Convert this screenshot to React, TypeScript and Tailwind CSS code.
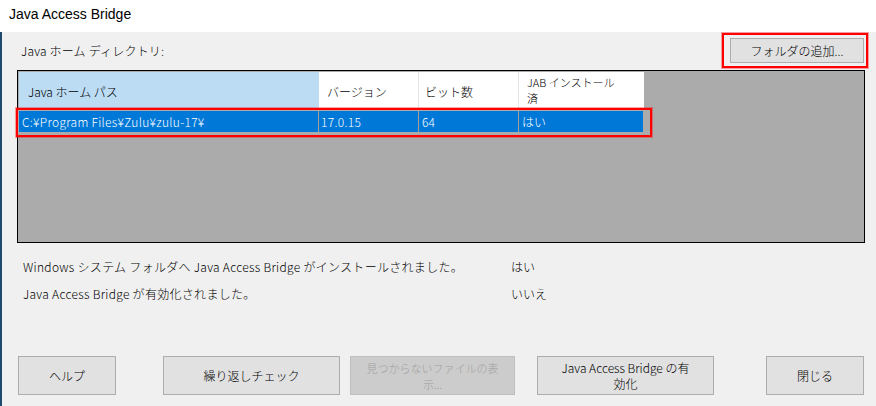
export default function App() {
  const btn =
    "flex h-[39px] items-center justify-center border border-[#adadad] bg-[#e1e1e1] text-[12px] text-black";

  return (
    <div className="flex h-[406px] w-[876px] flex-col bg-[#f0f0f0] font-['Noto_Sans_CJK_JP',sans-serif] text-[12px] font-light text-black">
      {/* Title bar */}
      <div className="flex h-8 items-center bg-white pb-[4px] pl-[9px] font-['Liberation_Sans',sans-serif] text-[14px] font-normal">
        Java Access Bridge
      </div>

      {/* Body */}
      <div className="flex flex-1 flex-col border-l-2 border-[#1c4a6e] pl-[15px] pr-[11px]">
        {/* Label + add folder */}
        <div className="mt-[6px] flex h-[25px] items-center justify-between">
          <span className="ml-[4px] tracking-[0.2px]">Java ホーム ディレクトリ:</span>
          <div className="relative mr-px">
            <button className="flex h-[25px] w-[134px] items-center justify-center border border-[#adadad] bg-[#e1e1e1]">
              フォルダの追加...
            </button>
            <div className="pointer-events-none absolute -top-[5px] -right-[4px] -bottom-[5px] -left-[8px] border-2 border-[#ff0000] shadow-[0_0_0_1px_rgba(255,0,0,0.35)]" />
          </div>
        </div>

        {/* Table */}
        <div className="mt-[7px] h-[173px] w-[848px] border border-black bg-[#ababab] p-px">
          <div className="flex h-[36px] w-[625px]">
            <div className="flex w-[300px] items-center border-r border-[#bcdcf4] bg-[#bcdcf4] pl-[9px] pt-[3px]">
              Java ホーム パス
            </div>
            <div className="flex w-[100px] items-center border-r border-[#e5e5e5] bg-white pl-[8px] pt-[3px]">
              バージョン
            </div>
            <div className="flex w-[100px] items-center border-r border-[#e5e5e5] bg-white pl-[6px] pt-[3px]">
              ビット数
            </div>
            <div className="flex w-[125px] flex-col justify-center bg-white pl-[8px] text-[11px] leading-[16px]">
              <span>JAB インストール</span>
              <span>済</span>
            </div>
          </div>
          <div className="relative mt-[3px] flex h-[21px] w-[624px] bg-[#0078d7] text-white">
            <div className="flex w-[300px] items-center border-r border-[#a69e94] pl-[3px] tracking-[0.3px]">
              C:¥Program Files¥Zulu¥zulu-17¥
            </div>
            <div className="flex w-[100px] items-center border-r border-[#a69e94] pl-[2px] tracking-[0.3px]">
              17.0.15
            </div>
            <div className="flex w-[100px] items-center border-r border-[#a69e94] pl-[3px]">
              64
            </div>
            <div className="flex flex-1 items-center pl-[3px]">はい</div>
            <div className="pointer-events-none absolute -top-[3px] -right-[9px] -bottom-[5px] -left-[3px] border-2 border-[#ff0000] shadow-[0_0_0_1px_rgba(255,0,0,0.35)]" />
          </div>
        </div>

        {/* Status */}
        <div className="mt-[16px] ml-[6px] grid grid-cols-[488px_auto]">
          <div className="h-[27px] leading-[16px] tracking-[0.3px]">
            Windows システム フォルダへ Java Access Bridge がインストールされました。
          </div>
          <div className="h-[27px] leading-[16px]">はい</div>
          <div className="h-[27px] leading-[16px] tracking-[0.3px]">
            Java Access Bridge が有効化されました。
          </div>
          <div className="h-[27px] leading-[16px]">いいえ</div>
        </div>

        {/* Buttons */}
        <div className="mt-auto mb-[11px] flex">
          <button className={`${btn} ml-px w-[98px]`}>ヘルプ</button>
          <button className={`${btn} ml-[47px] w-[177px]`}>繰り返しチェック</button>
          <button className="ml-[10px] flex h-[39px] w-[165px] flex-col items-center justify-center overflow-hidden border border-[#bfbfbf] bg-[#cccccc] text-[11px] leading-[16px] whitespace-nowrap text-[#a0a0a0]">
            <span>見つからないファイルの表</span>
            <span>示...</span>
          </button>
          <button className={`${btn} ml-[22px] w-[177px] flex-col text-[11px] leading-[16px]`}>
            <span>Java Access Bridge の有</span>
            <span>効化</span>
          </button>
          <button className={`${btn} ml-[52px] w-[98px]`}>閉じる</button>
        </div>
      </div>
    </div>
  );
}
